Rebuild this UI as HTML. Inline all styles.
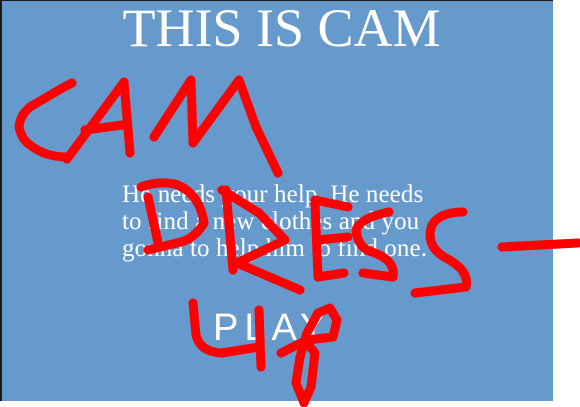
<!DOCTYPE html>
<html><head><meta charset="utf-8"><style>
html,body{margin:0;padding:0;background:#fff;width:580px;height:407px;overflow:hidden;position:relative}
#bg{position:absolute;left:0;top:0;width:553px;height:401px;background:#6699cc;border-left:2px solid #1a1a1a;border-top:1px solid #1a1a1a;box-sizing:border-box}
#title{position:absolute;left:0;width:563px;top:-3px;text-align:center;font-family:"Liberation Serif",serif;font-size:54px;color:#fff;white-space:nowrap}
#para{position:absolute;left:122px;top:181px;font-family:"Liberation Serif",serif;font-size:25px;line-height:27px;color:#fff;white-space:nowrap;letter-spacing:0.1px}
#play{position:absolute;left:213px;top:307px;font-family:"Liberation Sans",sans-serif;font-size:38px;color:#fff;letter-spacing:6px}
svg{position:absolute;left:0;top:0}
</style></head><body>
<div id="bg"></div>
<div id="title">THIS IS CAM</div>
<div id="para">He needs your help. He needs<br>to find a new clothes and you<br>gonna to help him to find one.</div>
<div id="play">PLAY</div>
<svg width="580" height="407" viewBox="0 0 580 407" fill="none" stroke="#ff0000" stroke-width="9" stroke-linecap="round" stroke-linejoin="round">
<path d="M72 83 Q62 88 59 90 L30 107 Q20 115 19 127 Q22 140 30 145 Q45 157 67 157"/>
<path d="M67 159 L124 82 L130 153"/>
<path d="M85 130 L122 125"/>
<path d="M154 137 L191 80 L193 143 L239 80 L256 127 L278 173"/>
<path d="M148 197 L159 247"/>
<path d="M141 187 Q160 180 178 185 Q200 195 204 223 Q195 238 181 242 L148 250"/>
<path d="M226 190 L233 270"/>
<path d="M222 190 L259 213 L285 240 L237 263 L300 290"/>
<path d="M315 203 L318 277"/>
<path d="M315 200 L348 207"/>
<path d="M318 240 L348 237"/>
<path d="M318 277 L344 273"/>
<path d="M389 212 Q360 218 356 230 Q358 248 372 252 Q396 260 393 277 L363 273"/>
<path d="M463 212 Q440 212 432 225 Q425 245 444 257 Q470 270 466 287 L415 293"/>
<path d="M502 247 L578 243"/>
<path d="M193 303 L196 335 Q200 352 222 353 L259 347"/>
<path d="M259 310 L261 367"/>
<path d="M281 353 L307 340 L333 337 L337 320 L330 308 L318 313 L307 333 L300 357 L296 383 L304 403 L311 387 L315 353 L307 343"/>
</svg>
</body></html>
